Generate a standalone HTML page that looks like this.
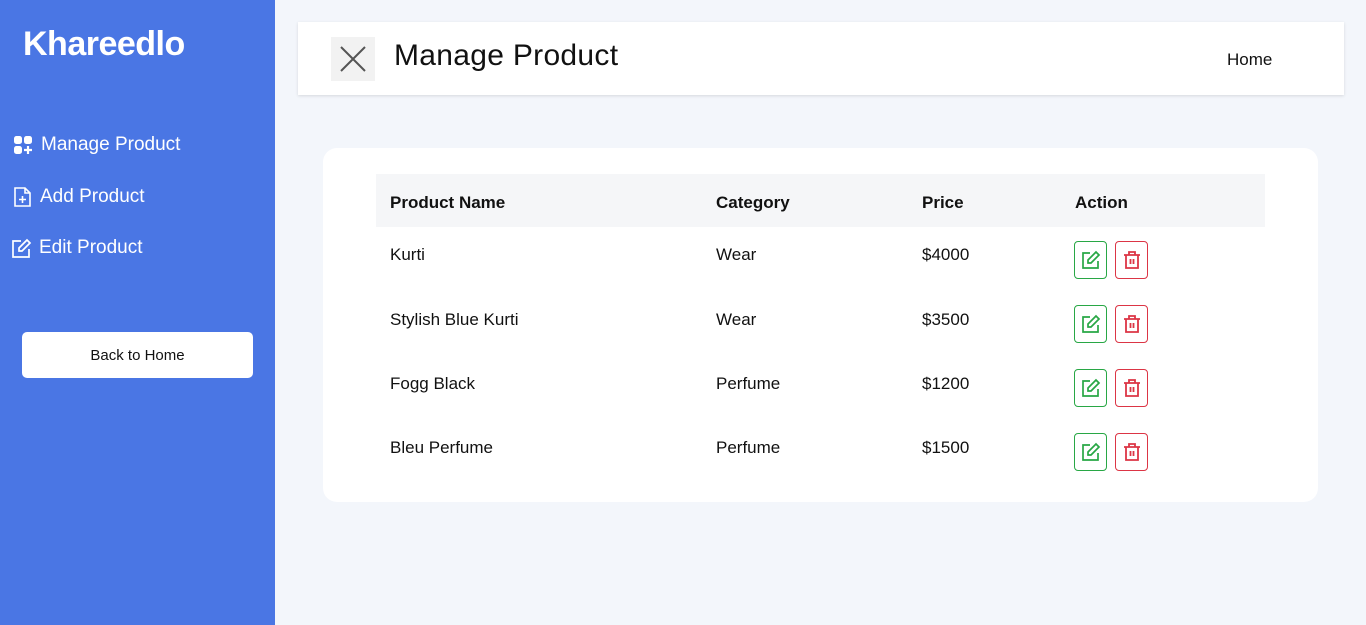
<!DOCTYPE html>
<html><head><meta charset="utf-8"><style>
*{box-sizing:border-box;margin:0;padding:0}
body{width:1366px;height:625px;background:#f3f6fb;font-family:"Liberation Sans",sans-serif;position:relative;overflow:hidden;color:#212529}
.side{position:absolute;left:0;top:0;width:275px;height:625px;background:#4a76e4;color:#fff}
.logo{position:absolute;left:23px;top:25px;font-size:34px;font-weight:bold;letter-spacing:-0.5px}
.nav{position:absolute;font-size:19px;display:flex;align-items:center;gap:7px}
.btn{position:absolute;left:22px;top:332px;width:231px;height:46px;background:#fff;border-radius:5px;color:#111;font-size:15px;text-align:center;line-height:48px}
.top{position:absolute;left:298px;top:22px;width:1046px;height:73px;background:#fff;box-shadow:0 1px 3px rgba(0,0,0,.12)}
.xbox{position:absolute;left:33px;top:15px;width:44px;height:44px;background:#f2f2f2}
.title{position:absolute;left:96px;top:17px;font-size:30px;color:#111;letter-spacing:0.3px}
.home{position:absolute;left:929px;top:28px;font-size:17px;color:#111}
.card{position:absolute;left:323px;top:148px;width:995px;height:354px;background:#fff;border-radius:14px}
.hdr{position:absolute;left:53px;top:26px;width:889px;height:53px;background:#f5f6f8}
.t{position:absolute;font-size:17px;color:#111}
.b{font-weight:bold}
.ib{position:absolute;width:33px;height:38px;border:1px solid;border-radius:4px;display:flex;align-items:center;justify-content:center}
.g{border-color:#28a745}.r{border-color:#dc3545}
</style></head><body>
<div class="side">
<div class="logo">Khareedlo</div>
<div class="nav" style="left:14px;top:134px"><svg width="20" height="20" viewBox="0 0 20 20" fill="#fff"><rect x="0" y="1" width="8" height="8" rx="2.5"/><rect x="10" y="1" width="8" height="8" rx="2.5"/><rect x="0" y="11" width="8" height="8" rx="2.5"/><path d="M14 11v8M10 15h8" stroke="#fff" stroke-width="2.2"/></svg>Manage Product</div>
<div class="nav" style="left:13px;top:186px"><svg width="20" height="22" viewBox="0 0 20 22" fill="none" stroke="#fff" stroke-width="1.6"><path d="M2 2h10l5 5v13H2z M12 2v5h5 M9.5 10v7M6 13.5h7"/></svg>Add Product</div>
<div class="nav" style="left:11px;top:237px"><svg width="21" height="21" viewBox="0 0 21 21" fill="none" stroke="#fff" stroke-width="1.7"><path d="M10 3H2v16h16v-8 M16 2l3 3-8 8H8v-3z"/></svg>Edit Product</div>
<div class="btn">Back to Home</div>
</div>
<div class="top">
<div class="xbox"><svg width="44" height="44" viewBox="0 0 44 44"><path d="M10 10l24 24M34 10L10 34" stroke="#555" stroke-width="2"/></svg></div>
<div class="title">Manage Product</div>
<div class="home">Home</div>
</div>
<div class="card">
<div class="hdr"></div>
<div class="t b" style="left:67px;top:45px">Product Name</div>
<div class="t b" style="left:393px;top:45px">Category</div>
<div class="t b" style="left:599px;top:45px">Price</div>
<div class="t b" style="left:752px;top:45px">Action</div>

<div class="t" style="left:67px;top:97px">Kurti</div><div class="t" style="left:393px;top:97px">Wear</div><div class="t" style="left:599px;top:97px">$4000</div>
<div class="t" style="left:67px;top:162px">Stylish Blue Kurti</div><div class="t" style="left:393px;top:162px">Wear</div><div class="t" style="left:599px;top:162px">$3500</div>
<div class="t" style="left:67px;top:226px">Fogg Black</div><div class="t" style="left:393px;top:226px">Perfume</div><div class="t" style="left:599px;top:226px">$1200</div>
<div class="t" style="left:67px;top:290px">Bleu Perfume</div><div class="t" style="left:393px;top:290px">Perfume</div><div class="t" style="left:599px;top:290px">$1500</div>

<div class="ib g" style="left:751px;top:93px"><svg width="20" height="20" viewBox="0 0 20 20" fill="none" stroke="#28a745" stroke-width="1.7"><path d="M9 3H2v15h15v-7 M15 2l3 3-8 8H7v-3z"/></svg></div>
<div class="ib r" style="left:792px;top:93px"><svg width="20" height="20" viewBox="0 0 20 20" fill="none" stroke="#dc3545" stroke-width="1.8"><path d="M2 5h16M7 5V2h6v3M4 5v13h12V5M8.5 9v5M11.5 9v5"/></svg></div>
<div class="ib g" style="left:751px;top:157px"><svg width="20" height="20" viewBox="0 0 20 20" fill="none" stroke="#28a745" stroke-width="1.7"><path d="M9 3H2v15h15v-7 M15 2l3 3-8 8H7v-3z"/></svg></div>
<div class="ib r" style="left:792px;top:157px"><svg width="20" height="20" viewBox="0 0 20 20" fill="none" stroke="#dc3545" stroke-width="1.8"><path d="M2 5h16M7 5V2h6v3M4 5v13h12V5M8.5 9v5M11.5 9v5"/></svg></div>
<div class="ib g" style="left:751px;top:221px"><svg width="20" height="20" viewBox="0 0 20 20" fill="none" stroke="#28a745" stroke-width="1.7"><path d="M9 3H2v15h15v-7 M15 2l3 3-8 8H7v-3z"/></svg></div>
<div class="ib r" style="left:792px;top:221px"><svg width="20" height="20" viewBox="0 0 20 20" fill="none" stroke="#dc3545" stroke-width="1.8"><path d="M2 5h16M7 5V2h6v3M4 5v13h12V5M8.5 9v5M11.5 9v5"/></svg></div>
<div class="ib g" style="left:751px;top:285px"><svg width="20" height="20" viewBox="0 0 20 20" fill="none" stroke="#28a745" stroke-width="1.7"><path d="M9 3H2v15h15v-7 M15 2l3 3-8 8H7v-3z"/></svg></div>
<div class="ib r" style="left:792px;top:285px"><svg width="20" height="20" viewBox="0 0 20 20" fill="none" stroke="#dc3545" stroke-width="1.8"><path d="M2 5h16M7 5V2h6v3M4 5v13h12V5M8.5 9v5M11.5 9v5"/></svg></div>
</div>
</body></html>
